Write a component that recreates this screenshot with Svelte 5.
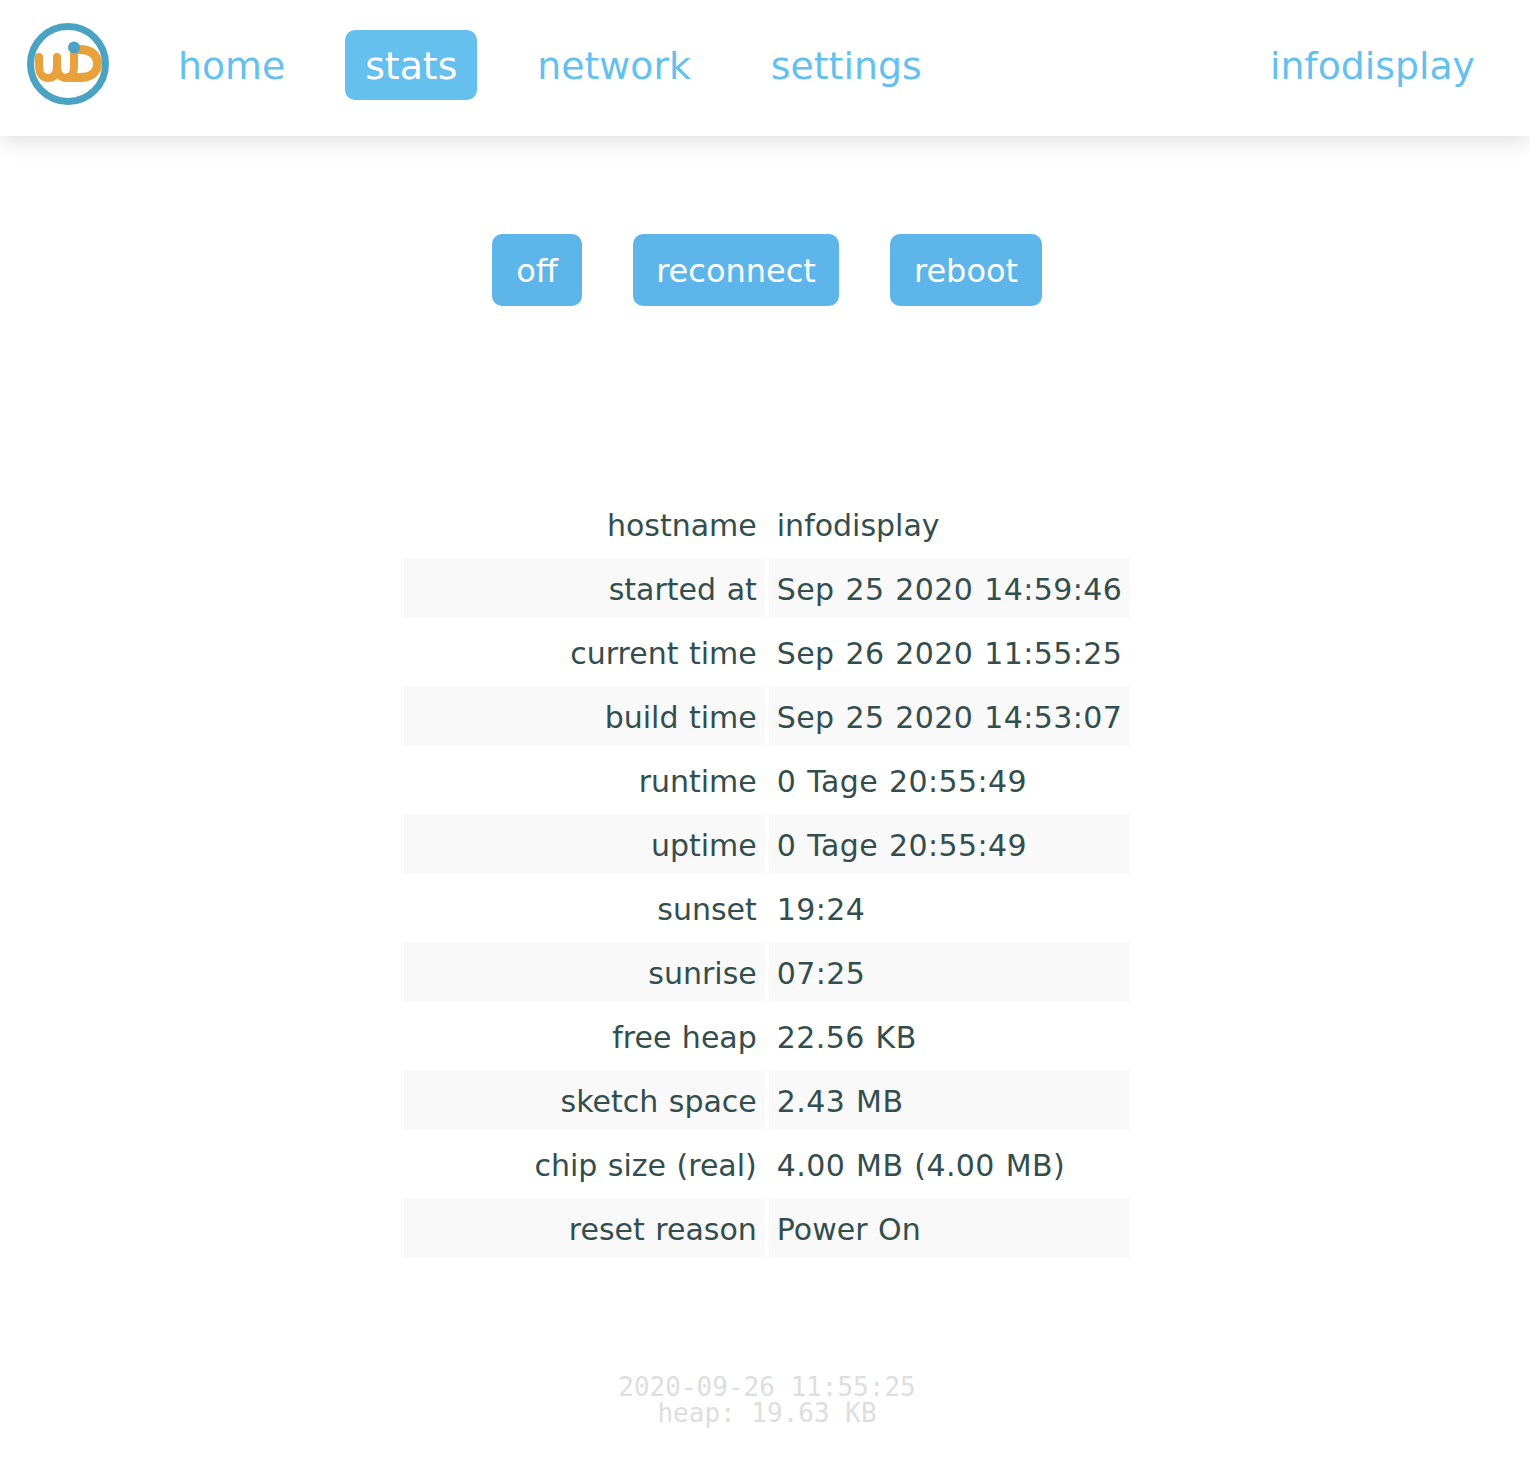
<script>
  const links = ['home', 'stats', 'network', 'settings']
  let active = 'stats'

  const rows = [
    ['hostname', 'infodisplay'],
    ['started at', 'Sep 25 2020 14:59:46'],
    ['current time', 'Sep 26 2020 11:55:25'],
    ['build time', 'Sep 25 2020 14:53:07'],
    ['runtime', '0 Tage 20:55:49'],
    ['uptime', '0 Tage 20:55:49'],
    ['sunset', '19:24'],
    ['sunrise', '07:25'],
    ['free heap', '22.56 KB'],
    ['sketch space', '2.43 MB'],
    ['chip size (real)', '4.00 MB (4.00 MB)'],
    ['reset reason', 'Power On']
  ]

  const hasDigits = (s) => /\d/.test(s)
</script>

<header>
  <svg class="logo" viewBox="0 0 84 84" width="84" height="84" aria-label="logo">
    <circle cx="42" cy="42" r="37.5" fill="none" stroke="#4ba3c3" stroke-width="7" />
    <g fill="none" stroke="#e9a23b" stroke-linecap="round" stroke-linejoin="round">
      <path
        d="M13 35 V44 C13 52 17 56 22 56 C28 56 31 52 31 44 V35 M31 44 C31 52 35 56 40 56 C45 56 48 52 48 44 V28"
        stroke-width="8"
      />
      <path d="M48 27.5 H54 C65 27.5 71.5 33.5 71.5 41.5 C71.5 50 65 55.5 54 55.5 H42" stroke-width="9" />
    </g>
    <circle cx="48" cy="25.5" r="6" fill="#4ba3c3" />
  </svg>
  <nav>
    {#each links as link}
      <a href="/" class:active={active === link} on:click|preventDefault={() => (active = link)}>{link}</a>
    {/each}
  </nav>
  <a href="/" class="host" on:click|preventDefault>infodisplay</a>
</header>

<main>
  <div class="actions">
    <button class="off">off</button>
    <button class="reconnect">reconnect</button>
    <button class="reboot">reboot</button>
  </div>

  <table>
    <tbody>
      {#each rows as [label, value]}
        <tr>
          <td class="label">{label}</td>
          <td class:num={hasDigits(value)}>{value}</td>
        </tr>
      {/each}
    </tbody>
  </table>

  <footer>
    <div>2020-09-26 11:55:25</div>
    <div>heap: 19.63 KB</div>
  </footer>
</main>

<style>
  :global(body) {
    background: #fff;
    font-family: 'DejaVu Sans', Verdana, sans-serif;
  }

  header {
    display: flex;
    align-items: center;
    height: 136px;
    padding: 0 35px 6px 26px;
    box-sizing: border-box;
    background: #fff;
    box-shadow: 0 4px 22px rgba(0, 0, 0, 0.14);
  }

  .logo {
    flex: none;
    margin-bottom: 2px;
  }

  nav {
    display: flex;
    gap: 40px;
    margin-left: 48px;
  }

  a {
    padding-top: 2px;
    font-size: 37.8px;
    line-height: 68px;
    color: #65c0ee;
    text-decoration: none;
  }

  nav a {
    padding-left: 20px;
    padding-right: 20px;
    border-radius: 10px;
  }

  nav a.active {
    background: #65c0ee;
    color: #fff;
  }

  .host {
    margin-left: auto;
    padding-left: 20px;
    padding-right: 20px;
  }

  main {
    padding-left: 4px;
  }

  .actions {
    display: flex;
    justify-content: center;
    gap: 51px;
    padding: 98px 0 0;
  }

  button {
    height: 72px;
    padding: 2px 0 0;
    border: 0;
    border-radius: 10px;
    background: #5eb5ea;
    color: #fff;
    font-family: inherit;
    font-size: 32px;
  }

  .off {
    width: 90px;
  }

  .reconnect {
    width: 206px;
  }

  .reboot {
    width: 152px;
  }

  table {
    margin: 184px auto 0;
    border-spacing: 4px;
    color: #344e4e;
    font-size: 30px;
    word-spacing: 1px;
  }

  td {
    width: 361px;
    height: 60px;
    padding: 2px 8px 0;
    box-sizing: border-box;
    white-space: nowrap;
  }

  td.label {
    text-align: right;
  }

  td.num {
    letter-spacing: 0.4px;
  }

  tr:nth-child(even) td {
    background: #f9f9f9;
  }

  footer {
    margin-top: 112px;
    padding-bottom: 50px;
    color: #dedede;
    font-family: 'DejaVu Sans Mono', monospace;
    font-size: 26px;
    line-height: 26px;
    text-align: center;
  }
</style>
